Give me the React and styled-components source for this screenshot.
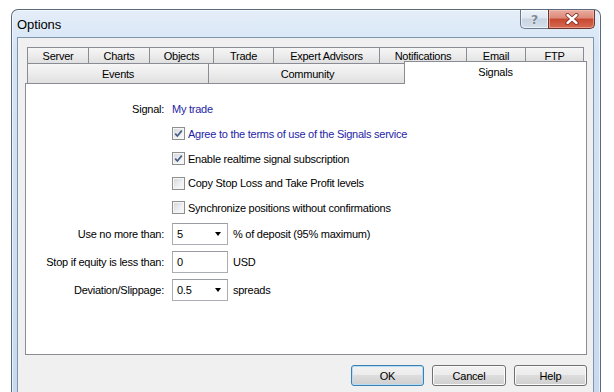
import React from "react";
import styled, { createGlobalStyle } from "styled-components";

const Global = createGlobalStyle`
  html, body { margin: 0; padding: 0; background: #fff; height: 392px; overflow: hidden; }
  body { font-family: "Liberation Sans", Arial, sans-serif; font-size: 11px; color: #000; }
  * { box-sizing: border-box; }
`;

const Page = styled.div`
  width: 614px;
  height: 392px;
  overflow: hidden;
  padding: 9px 0 0 11px;
`;

const Window = styled.div`
  width: 590px;
  height: 420px;
  border: 1px solid #5b6b7e;
  border-bottom: none;
  border-radius: 7px 7px 0 0;
  background: linear-gradient(to bottom, #e4eef9 0%, #d5e4f5 10%, #c6d9ef 100%);
  box-shadow: inset 0 0 0 1px rgba(255, 255, 255, 0.6);
  padding: 0 6px 0 5px;
  display: flex;
  flex-direction: column;
`;

const TitleBar = styled.div`
  height: 27px;
  display: flex;
  align-items: flex-start;
  flex-shrink: 0;
`;

const Title = styled.div`
  flex: 1;
  align-self: center;
  font-size: 13px;
  letter-spacing: -0.1px;
  color: #000;
  padding-top: 1px;
`;

const CaptionButtons = styled.div`
  display: flex;
  margin-right: -1px;
`;

const HelpButton = styled.div`
  width: 28px;
  height: 19px;
  border: 1px solid #6a7a8d;
  border-top: none;
  border-right: none;
  border-radius: 0 0 0 5px;
  background: linear-gradient(to bottom, #eef3f9 0%, #dfe7f1 45%, #c8d4e2 50%, #d5e0ec 100%);
  box-shadow: inset 0 0 0 1px rgba(255, 255, 255, 0.6);
  display: flex;
  align-items: center;
  justify-content: center;
  font-family: "DejaVu Sans", sans-serif;
  font-size: 13px;
  font-weight: bold;
  color: #7d8896;
  text-shadow: 0 0 1px #fff, 0 0 1px #fff;
`;

const CloseButton = styled.div`
  width: 47px;
  height: 19px;
  border: 1px solid #6b3530;
  border-top: none;
  border-radius: 0 0 5px 0;
  background: linear-gradient(to bottom, #e9ab9f 0%, #dc8a79 45%, #c7472f 50%, #d66a52 100%);
  box-shadow: inset 0 0 0 1px rgba(255, 200, 190, 0.5);
  display: flex;
  align-items: center;
  justify-content: center;
`;

const Client = styled.div`
  flex: 1;
  background: #f0f0f0;
  border: 1px solid #7f95ad;
  padding: 9px 6px 0 7px;
  display: flex;
  flex-direction: column;
`;

const TabStrip = styled.div`
  margin: 0 2px;
  display: flex;
  flex-direction: column;
`;

const TabRow = styled.div`
  display: flex;
  align-items: flex-end;
  height: ${(p) => p.$h}px;
`;

const Tab = styled.div`
  flex-shrink: 0;
  width: ${(p) => p.$w}px;
  height: 100%;
  margin-right: -1px;
  border: 1px solid #898c95;
  border-bottom: none;
  background: linear-gradient(to bottom, #f6f6f6 0%, #ececec 50%, #e0e0e0 100%);
  display: flex;
  align-items: center;
  justify-content: center;
  letter-spacing: -0.25px;
  color: #000;
  padding-top: ${(p) => (p.$pt ? p.$pt : 0)}px;
`;

const ActiveTab = styled.div`
  flex-shrink: 0;
  position: relative;
  z-index: 2;
  width: ${(p) => p.$w}px;
  height: 23px;
  margin: 0 0 -1px -2px;
  border: 1px solid #898c95;
  border-bottom: none;
  background: #fff;
  display: flex;
  align-items: flex-start;
  justify-content: center;
  padding-top: 4px;
  letter-spacing: -0.25px;
`;

const Panel = styled.div`
  height: 272px;
  background: #fff;
  border: 1px solid #898c95;
  padding-top: 12px;
  display: grid;
  grid-template-columns: 138px 1fr;
  grid-template-rows: 25px 25px 25px 24px 25px 28px 28px 28px;
  column-gap: 8px;
  align-items: center;
`;

const Label = styled.div`
  grid-column: 1;
  text-align: right;
  letter-spacing: -0.25px;
  white-space: nowrap;
`;

const Value = styled.div`
  grid-column: 2;
  display: flex;
  align-items: center;
  gap: ${(p) => (p.$gap != null ? p.$gap : 5)}px;
  letter-spacing: -0.25px;
  white-space: nowrap;
  color: ${(p) => (p.$blue ? "#2424a6" : "#000")};
`;

const CheckBox = styled.span`
  width: 13px;
  height: 13px;
  flex-shrink: 0;
  border: 1px solid #8e8f8f;
  background: linear-gradient(135deg, #d2d4d8 0%, #eef0f2 60%, #fbfbfb 100%);
  box-shadow: inset 0 0 0 1px #f6f6f6;
  display: flex;
  align-items: center;
  justify-content: center;
`;

const Field = styled.div`
  width: 56px;
  height: 22px;
  border: 1px solid #abadb3;
  border-top-color: #9a9ca3;
  background: #fff;
  display: flex;
  align-items: center;
  justify-content: space-between;
  padding: 0 6px 0 4px;
  color: #000;
`;

const Arrow = styled.span`
  width: 0;
  height: 0;
  border-left: 3.5px solid transparent;
  border-right: 3.5px solid transparent;
  border-top: 4px solid #000;
`;

const ButtonRow = styled.div`
  margin-top: 10px;
  display: flex;
  justify-content: flex-end;
  gap: 8px;
`;

const Button = styled.div`
  width: ${(p) => p.$w}px;
  height: 21px;
  border: 1px solid ${(p) => (p.$default ? "#3c7fb1" : "#707070")};
  border-radius: 3px;
  background: linear-gradient(to bottom, #f2f2f2 0%, #ebebeb 50%, #dddddd 50%, #cfcfcf 100%);
  box-shadow: inset 0 0 0 1px ${(p) => (p.$default ? "#b4def5" : "#fbfbfb")};
  display: flex;
  align-items: center;
  justify-content: center;
  letter-spacing: -0.2px;
  color: #000;
`;

const row1 = [
  ["Server", 62],
  ["Charts", 62],
  ["Objects", 65],
  ["Trade", 61],
  ["Expert Advisors", 107],
  ["Notifications", 88],
  ["Email", 60],
  ["FTP", 59],
];

const Check = () => (
  <svg width="9" height="9" viewBox="0 0 9 9">
    <path d="M1.2 4.6 L3.4 7 L7.8 1.6" fill="none" stroke="#4a5e86" strokeWidth="1.7" />
  </svg>
);

const CloseGlyph = () => (
  <svg width="14" height="12" viewBox="0 0 14 12">
    <path d="M2.5 2 L11.5 10 M11.5 2 L2.5 10" stroke="#7a2a20" strokeWidth="4" strokeLinecap="round" />
    <path d="M2.5 2 L11.5 10 M11.5 2 L2.5 10" stroke="#fff" strokeWidth="2.4" strokeLinecap="round" />
  </svg>
);

const checks = [
  ["Agree to the terms of use of the Signals service", true, true],
  ["Enable realtime signal subscription", true, false],
  ["Copy Stop Loss and Take Profit levels", false, false],
  ["Synchronize positions without confirmations", false, false],
];

export default function App() {
  return (
    <Page>
      <Global />
      <Window>
        <TitleBar>
          <Title>Options</Title>
          <CaptionButtons>
            <HelpButton>?</HelpButton>
            <CloseButton>
              <CloseGlyph />
            </CloseButton>
          </CaptionButtons>
        </TitleBar>
        <Client>
          <TabStrip>
            <TabRow $h={16}>
              {row1.map(([t, w]) => (
                <Tab key={t} $w={w}>
                  {t}
                </Tab>
              ))}
            </TabRow>
            <TabRow $h={20}>
              <Tab $w={182}>Events</Tab>
              <Tab $w={199}>Community</Tab>
              <ActiveTab $w={183}>Signals</ActiveTab>
            </TabRow>
          </TabStrip>
          <Panel>
            <Label>Signal:</Label>
            <Value $blue>My trade</Value>
            {checks.map(([t, on, blue]) => (
              <Value key={t} $blue={blue} $gap={3}>
                <CheckBox>{on && <Check />}</CheckBox>
                {t}
              </Value>
            ))}
            <Label>Use no more than:</Label>
            <Value>
              <Field>
                5<Arrow />
              </Field>
              % of deposit (95% maximum)
            </Value>
            <Label>Stop if equity is less than:</Label>
            <Value>
              <Field>0</Field>
              USD
            </Value>
            <Label>Deviation/Slippage:</Label>
            <Value>
              <Field>
                0.5
                <Arrow />
              </Field>
              spreads
            </Value>
          </Panel>
          <ButtonRow>
            <Button $w={73} $default>OK</Button>
            <Button $w={74}>Cancel</Button>
            <Button $w={73}>Help</Button>
          </ButtonRow>
        </Client>
      </Window>
    </Page>
  );
}
